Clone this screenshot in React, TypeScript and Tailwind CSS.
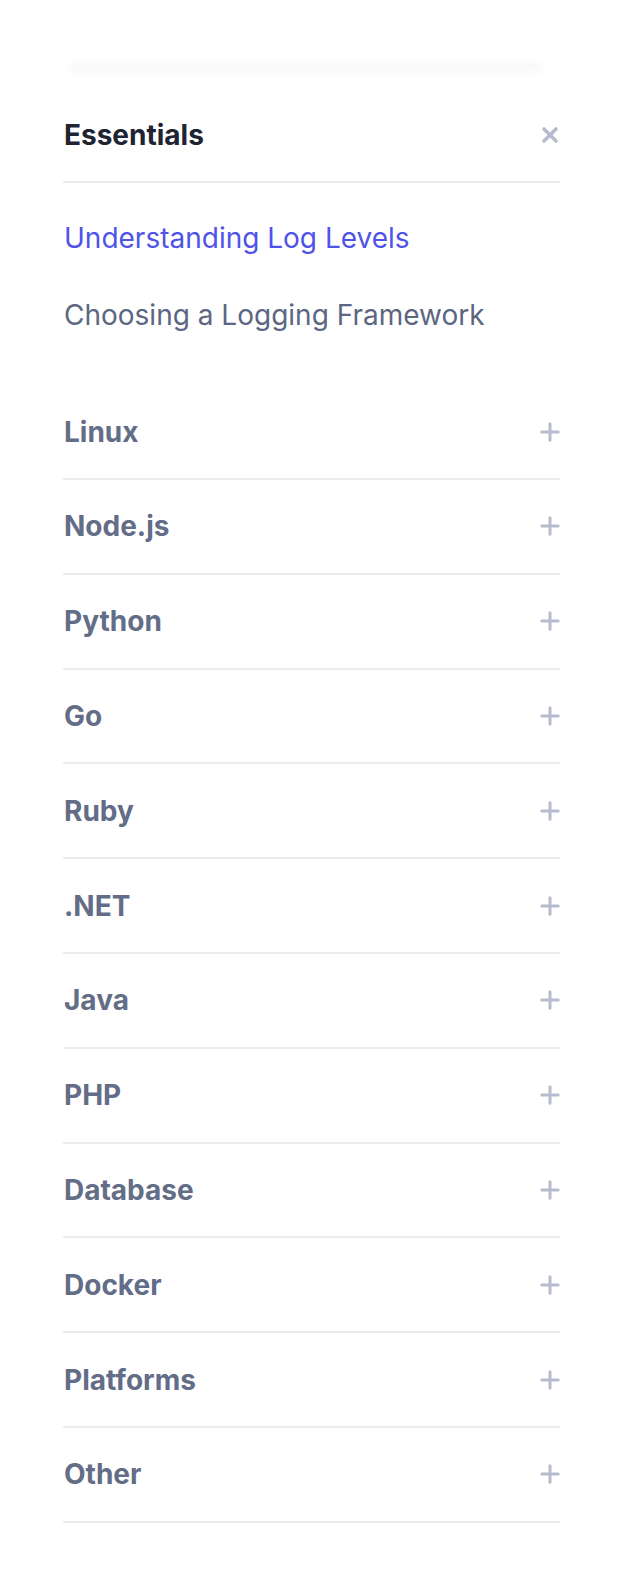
import React from 'react';

const sections = [
  'Linux',
  'Node.js',
  'Python',
  'Go',
  'Ruby',
  '.NET',
  'Java',
  'PHP',
  'Database',
  'Docker',
  'Platforms',
  'Other',
];

const links = [
  { label: 'Understanding Log Levels', active: true },
  { label: 'Choosing a Logging Framework', active: false },
];

// plus sign on collapsed sections
const PlusIcon = () => (
  <svg width="20" height="20" viewBox="0 0 20 20" fill="none" className="shrink-0">
    <path d="M1.8 10h16.4M10 1.8v16.4" stroke="#b6bccd" strokeWidth="3" strokeLinecap="round" />
  </svg>
);

// close cross on the open section
const CloseIcon = () => (
  <svg width="20" height="20" viewBox="0 0 20 20" fill="none" className="shrink-0">
    <path d="M4 4l12 12M16 4L4 16" stroke="#b6bccd" strokeWidth="3.6" strokeLinecap="round" />
  </svg>
);

export default function App() {
  return (
    <div
      className="min-h-[1587px] w-full bg-white pl-[63px] pr-[67px] pt-[63px]"
      style={{ fontFamily: 'Inter, "Noto Sans", sans-serif' }}
    >
      <div className="mx-[6px] mr-[16px] h-[14px] rounded-full bg-gradient-to-b from-[#f6f6f8] to-white blur-[2px]" />

      <nav className="mt-[11px]">
        {/* open section */}
        <div className="flex h-[95px] items-center justify-between border-b-2 border-[#ebecf0]">
          <span className="pl-px text-[28px] font-bold leading-none text-[#1f2433]">Essentials</span>
          <CloseIcon />
        </div>

        <ul className="pt-[16px] pb-[32.2px]">
          {links.map((l) => (
            <li
              key={l.label}
              className={`flex h-[77px] items-center pl-px text-[28px] leading-none ${
                l.active ? 'text-[#4f53e8]' : 'text-[#5c6681]'
              }`}
            >
              {l.label}
            </li>
          ))}
        </ul>

        {/* collapsed sections */}
        {sections.map((s) => (
          <div
            key={s}
            className="flex h-[94.8px] items-center justify-between border-b-2 border-[#ebecf0]"
          >
            <span className="pl-px text-[28px] font-bold leading-none text-[#636d87]">{s}</span>
            <PlusIcon />
          </div>
        ))}
      </nav>
    </div>
  );
}
